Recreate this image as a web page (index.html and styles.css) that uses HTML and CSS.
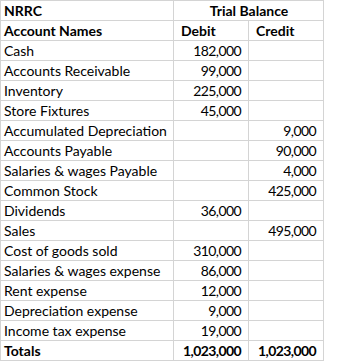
FILE: index.html
```html
<!DOCTYPE html>
<html>
<head>
<meta charset="utf-8">
<link rel="stylesheet" href="styles.css">
</head>
<body>
<table class="sheet">
  <colgroup>
    <col class="c-name">
    <col class="c-num">
    <col class="c-num2">
  </colgroup>
  <tr><td class="b">NRRC</td><td class="b center" colspan="2">Trial Balance</td></tr>
  <tr><td class="b">Account Names</td><td class="b head">Debit</td><td class="b head">Credit</td></tr>
  <tr><td>Cash</td><td class="num">182,000</td><td class="num"></td></tr>
  <tr><td>Accounts Receivable</td><td class="num">99,000</td><td class="num"></td></tr>
  <tr><td>Inventory</td><td class="num">225,000</td><td class="num"></td></tr>
  <tr><td>Store Fixtures</td><td class="num">45,000</td><td class="num"></td></tr>
  <tr><td>Accumulated Depreciation</td><td class="num"></td><td class="num">9,000</td></tr>
  <tr><td>Accounts Payable</td><td class="num"></td><td class="num">90,000</td></tr>
  <tr><td>Salaries &amp; wages Payable</td><td class="num"></td><td class="num">4,000</td></tr>
  <tr><td>Common Stock</td><td class="num"></td><td class="num">425,000</td></tr>
  <tr><td>Dividends</td><td class="num">36,000</td><td class="num"></td></tr>
  <tr><td>Sales</td><td class="num"></td><td class="num">495,000</td></tr>
  <tr><td>Cost of goods sold</td><td class="num">310,000</td><td class="num"></td></tr>
  <tr><td>Salaries &amp; wages expense</td><td class="num">86,000</td><td class="num"></td></tr>
  <tr><td>Rent expense</td><td class="num">12,000</td><td class="num"></td></tr>
  <tr><td>Depreciation expense</td><td class="num">9,000</td><td class="num"></td></tr>
  <tr><td>Income tax expense</td><td class="num">19,000</td><td class="num"></td></tr>
  <tr class="totals"><td class="b">Totals</td><td class="b num total">1,023,000</td><td class="b num total">1,023,000</td></tr>
</table>
</body>
</html>
```
FILE: styles.css
```css
html, body {
  margin: 0;
  padding: 0;
  background: #fff;
}
.sheet {
  border-collapse: collapse;
  table-layout: fixed;
  width: 323px;
  font-family: Lato, "Liberation Sans", Arial, sans-serif;
  font-size: 14px;
  color: #000;
}
.c-name { width: 173px; }
.c-num { width: 75px; }
.c-num2 { width: 75px; }
.sheet td {
  border: 1px solid #d4d4d4;
  height: 19px;
  padding: 1px 2px 0 3px;
  line-height: 18px;
  vertical-align: bottom;
  white-space: nowrap;
  overflow: hidden;
  box-sizing: border-box;
}
.sheet td.b { font-weight: bold; }
.sheet td.center { text-align: center; }
.sheet td.head { padding-left: 7px; }
.sheet td.num {
  text-align: right;
  padding-right: 7px;
  letter-spacing: -0.6px;
}
.sheet td.total { border-top: 1px solid #000; }
```
